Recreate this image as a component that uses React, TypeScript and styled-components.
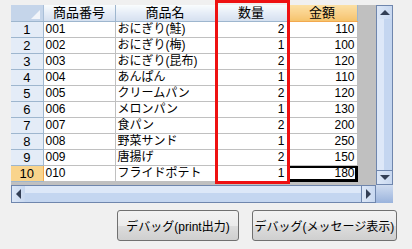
import React from 'react';
import styled, { createGlobalStyle, css } from 'styled-components';

interface Item {
  code: string;
  name: string;
  qty: number;
  price: number;
}

const ITEMS: Item[] = [
  { code: '001', name: 'おにぎり(鮭)', qty: 2, price: 110 },
  { code: '002', name: 'おにぎり(梅)', qty: 1, price: 100 },
  { code: '003', name: 'おにぎり(昆布)', qty: 2, price: 120 },
  { code: '004', name: 'あんぱん', qty: 1, price: 110 },
  { code: '005', name: 'クリームパン', qty: 2, price: 120 },
  { code: '006', name: 'メロンパン', qty: 1, price: 130 },
  { code: '007', name: '食パン', qty: 2, price: 200 },
  { code: '008', name: '野菜サンド', qty: 1, price: 250 },
  { code: '009', name: '唐揚げ', qty: 2, price: 150 },
  { code: '010', name: 'フライドポテト', qty: 1, price: 180 },
];

const SELECTED_ROW = 9;

const FONT = `"Liberation Sans", "Noto Sans CJK JP", sans-serif`;

const GlobalStyle = createGlobalStyle`
  html, body {
    margin: 0;
    padding: 0;
    background: #f0f0f0;
  }
  body {
    font-family: ${FONT};
    font-size: 12px;
    color: #000;
  }
`;

export default function App() {
  return (
    <Page>
      <GlobalStyle />
      <GridFrame>
        <Viewport>
          <Table>
            <colgroup>
              <col style={{ width: 32 }} />
              <col style={{ width: 72 }} />
              <col style={{ width: 100 }} />
              <col style={{ width: 72 }} />
              <col style={{ width: 70 }} />
            </colgroup>
            <thead>
              <tr>
                <Corner>
                  <CornerMark />
                </Corner>
                <ColHeader>商品番号</ColHeader>
                <ColHeader>商品名</ColHeader>
                <ColHeader>数量</ColHeader>
                <ColHeader $active>金額</ColHeader>
              </tr>
            </thead>
            <tbody>
              {ITEMS.map((item, i) => (
                <tr key={item.code}>
                  <RowHeader $active={i === SELECTED_ROW}>{i + 1}</RowHeader>
                  <Cell>{item.code}</Cell>
                  <Cell>{item.name}</Cell>
                  <Cell $right>{item.qty}</Cell>
                  <Cell $right $current={i === SELECTED_ROW}>
                    {item.price}
                  </Cell>
                </tr>
              ))}
            </tbody>
          </Table>
          <Highlight />
        </Viewport>
        <VScroll>
          <ArrowButton>
            <Arrow $dir="up" />
          </ArrowButton>
          <VTrack />
          <ArrowButton>
            <Arrow $dir="down" />
          </ArrowButton>
        </VScroll>
        <HScroll>
          <ArrowButton>
            <Arrow $dir="left" />
          </ArrowButton>
          <HTrack />
          <ArrowButton>
            <Arrow $dir="right" />
          </ArrowButton>
        </HScroll>
        <SizeBox />
      </GridFrame>
      <ButtonRow>
        <Button $width={122}>デバッグ(print出力)</Button>
        <Button $width={145}>デバッグ(メッセージ表示)</Button>
      </ButtonRow>
    </Page>
  );
}

const Page = styled.div`
  width: 412px;
  height: 249px;
  padding: 5px 0 0 11px;
  box-sizing: border-box;
  display: flex;
  flex-direction: column;
`;

const GridFrame = styled.div`
  position: relative;
  width: 382px;
  height: 198px;
  display: grid;
  grid-template-columns: 365px 17px;
  grid-template-rows: 180px 18px;
`;

const Viewport = styled.div`
  position: relative;
  background: #c0c0c0;
`;

const Table = styled.table`
  border-collapse: collapse;
  table-layout: fixed;
  width: 346px;
  background: #fff;
`;

const headerCell = css`
  height: 16px;
  padding: 0;
  font-size: 13px;
  font-weight: normal;
  line-height: 16px;
  text-align: center;
  white-space: nowrap;
  border-right: 1px solid #9eb6ce;
  border-bottom: 1px solid #9eb6ce;
`;

const Corner = styled.th`
  ${headerCell};
  position: relative;
  background: #c5d5ea;
  border-right-color: #a9bfd8;
`;

const CornerMark = styled.span`
  position: absolute;
  right: 3px;
  bottom: 2px;
  width: 0;
  height: 0;
  border-left: 9px solid transparent;
  border-bottom: 9px solid #f2f5fa;
`;

const ColHeader = styled.th<{ $active?: boolean }>`
  ${headerCell};
  background: ${(p) =>
    p.$active
      ? 'linear-gradient(#fbe0a4, #f9d089 55%, #f5c36c)'
      : 'linear-gradient(#f9fcfd, #e6edf7 50%, #d5e0ef)'};
  border-bottom-color: ${(p) => (p.$active ? '#f2a94f' : '#9eb6ce')};
`;

const RowHeader = styled.td<{ $active?: boolean }>`
  height: 15px;
  padding: 0;
  line-height: 15px;
  font-size: 13px;
  text-align: center;
  background: ${(p) => (p.$active ? '#f9d48c' : '#e4ecf7')};
  border-right: 1px solid ${(p) => (p.$active ? '#f2a94f' : '#9eb6ce')};
  border-bottom: 1px solid #9eb6ce;
`;

const Cell = styled.td<{ $right?: boolean; $current?: boolean }>`
  height: 15px;
  padding: 0 2px;
  line-height: 15px;
  font-size: 12px;
  white-space: nowrap;
  overflow: hidden;
  text-align: ${(p) => (p.$right ? 'right' : 'left')};
  border-right: 1px solid #c0c0c0;
  border-bottom: 1px solid #c0c0c0;
  ${(p) =>
    p.$current &&
    css`
      box-shadow: inset 0 0 0 2px #000;
      border-right-color: #000;
      border-bottom-color: #000;
    `}
`;

const Highlight = styled.div`
  position: absolute;
  left: 204px;
  top: -5px;
  width: 69px;
  height: 178px;
  border: 3px solid #ee1111;
  pointer-events: none;
`;

const scrollBase = css`
  display: flex;
  background: #d6e3f5;
  border: 1px solid #6f86ad;
  box-sizing: border-box;
`;

const VScroll = styled.div`
  ${scrollBase};
  flex-direction: column;
`;

const HScroll = styled.div`
  ${scrollBase};
  flex-direction: row;
`;

const ArrowButton = styled.div`
  flex: 0 0 15px;
  min-height: 15px;
  display: flex;
  align-items: center;
  justify-content: center;
  background: linear-gradient(90deg, #dce7f7, #c8d8f0);
  border: 1px solid #6f86ad;
  margin: -1px;
  box-sizing: border-box;
`;

const VTrack = styled.div`
  flex: 1;
  background: linear-gradient(90deg, #dde8f8 0 45%, #c4d6f0 45% 100%);
`;

const HTrack = styled.div`
  flex: 1;
  background: linear-gradient(#dde8f8 0 45%, #c4d6f0 45% 100%);
`;

const arrowShapes = {
  up: css`
    border-left: 5px solid transparent;
    border-right: 5px solid transparent;
    border-bottom: 5px solid #333f55;
  `,
  down: css`
    border-left: 5px solid transparent;
    border-right: 5px solid transparent;
    border-top: 5px solid #333f55;
  `,
  left: css`
    border-top: 5px solid transparent;
    border-bottom: 5px solid transparent;
    border-right: 5px solid #333f55;
  `,
  right: css`
    border-top: 5px solid transparent;
    border-bottom: 5px solid transparent;
    border-left: 5px solid #333f55;
  `,
};

const Arrow = styled.span<{ $dir: keyof typeof arrowShapes }>`
  width: 0;
  height: 0;
  ${(p) => arrowShapes[p.$dir]};
`;

const SizeBox = styled.div`
  background: linear-gradient(#cfdcf0, #9ab3dc);
`;

const ButtonRow = styled.div`
  display: flex;
  justify-content: flex-end;
  gap: 13px;
  width: 386px;
  margin-top: 7px;
`;

const Button = styled.button<{ $width: number }>`
  width: ${(p) => p.$width}px;
  height: 31px;
  padding: 0;
  font-family: ${FONT};
  font-size: 12px;
  white-space: nowrap;
  color: #000;
  background: linear-gradient(#f2f2f2, #ebebeb 50%, #dddddd 50%, #cfcfcf);
  border: 1px solid #707070;
  border-radius: 3px;
`;
